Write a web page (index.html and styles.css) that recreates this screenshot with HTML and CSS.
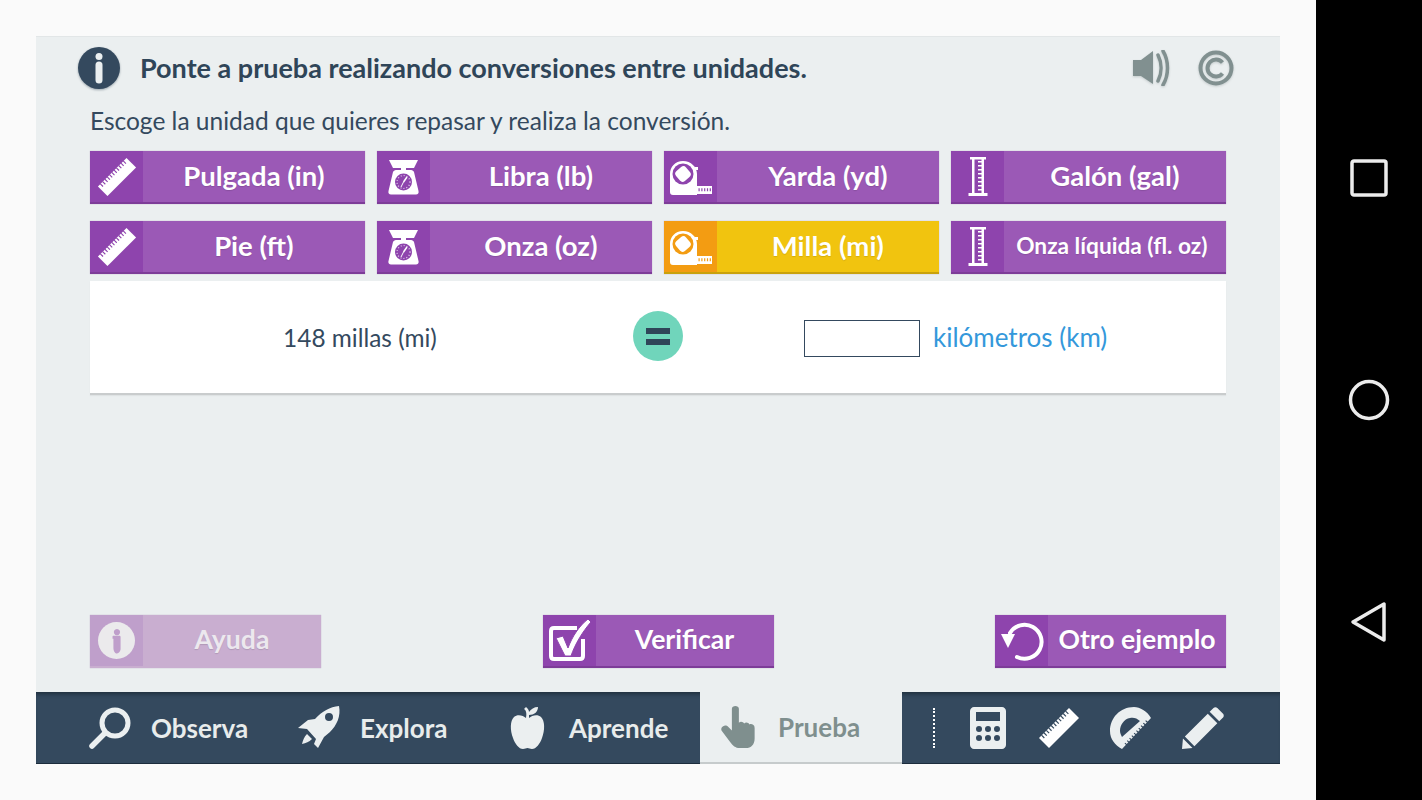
FILE: index.html
```html
<!DOCTYPE html>
<html lang="es">
<head>
<meta charset="utf-8">
<title>Conversiones entre unidades</title>
<link rel="stylesheet" href="styles.css">
</head>
<body>
<svg class="defs" width="0" height="0" aria-hidden="true">
  <symbol id="i-ruler" viewBox="0 0 42 42">
    <path class="paint" d="M31 1 41 11 11 41 1 31Z"/>
    <path class="ticks" d="M4.500 30 30 4.500"/>
  </symbol>
  <symbol id="i-scale" viewBox="0 0 31 36">
    <path class="paint" d="M1 1H30L26 9H18V11H23C24.500 11 25.500 12 26 13L30.500 32C31 34 30 35.500 28 35.500H3C1 35.500 0 34 .5 32L5 13C5.500 12 6.500 11 8 11H13V9H5Z"/>
    <circle class="hole" cx="15.500" cy="23" r="8.500"/>
    <circle cx="15.500" cy="23" r="6.500" fill="none" stroke="#fff" stroke-width="1.200" stroke-dasharray="1 2" opacity=".75"/>
    <path d="M15.500 23 19 18" stroke="#fff" stroke-width="1.500"/>
    <path d="M15.500 23 13 28" stroke="#fff" stroke-width="1"/>
  </symbol>
  <symbol id="i-tape" viewBox="0 0 42 34">
    <path class="paint" d="M13 0C21 0 27 6 27 13V25H42V33H27V34H3C1 34 0 33 0 31V13C0 6 5 0 13 0Z"/>
    <circle class="hole" cx="13" cy="13" r="10.500"/>
    <rect class="paint" x="6.500" y="6.500" width="13" height="13" rx="3.500" transform="rotate(-40 13 13)"/>
    <path class="ticks-flat" d="M28.500 28.800H41"/>
    <rect class="paint" x="25" y="6" width="3" height="3"/>
  </symbol>
  <symbol id="i-cyl" viewBox="0 0 20 39">
    <path class="paint" fill-rule="evenodd" d="M2 0H18V2.500H16V36H19.500V39H.5V36H4V2.500H2ZM6.500 2.500V36H13.500V33.500H10V32H13.500V29.500H10V28H13.500V25.500H10V24H13.500V21.500H10V20H13.500V17.500H10V16H13.500V13.500H10V12H13.500V9.500H10V8H13.500V5.500H10V4H13.500V2.500Z"/>
  </symbol>
  <symbol id="i-info" viewBox="0 0 38 38">
    <path fill="currentColor" d="M19 5.500A3.500 3.500 0 1 1 18.900 5.500ZM15 13H21.500C22.500 13 23 13.500 23 14.500V28C23 30 21 33 19 33S15 30 15 27V16.500H14V14C14 13.500 14.500 13 15 13Z"/>
  </symbol>
</svg>

<div class="app">
  <div class="screen">
    <main class="panel">
      <div class="content">
        <header class="head">
          <svg class="info-badge" viewBox="0 0 42 42">
            <circle cx="21" cy="21" r="21" fill="#34495e"/>
            <circle cx="21" cy="9.500" r="3.500" fill="#ebeff0"/>
            <rect x="17.500" y="14.500" width="7" height="22" rx="3.500" fill="#ebeff0"/>
          </svg>
          <h1 class="title">Ponte a prueba realizando conversiones entre unidades.</h1>
          <svg class="sound" viewBox="0 0 38 36">
            <path d="M1 10H9L21 1V34L9 26H1Z" fill="#819090"/>
            <path d="M26 5C30 13 30 23 26 31M31 1C37 11 37 25 31 35" fill="none" stroke="#819090" stroke-width="3.500" stroke-linecap="round"/>
          </svg>
          <svg class="copy" viewBox="0 0 36 36">
            <circle cx="18" cy="18" r="15.500" fill="none" stroke="#819090" stroke-width="4"/>
            <path d="M24.500 12.500A8.500 8.500 0 1 0 24.500 23.500" fill="none" stroke="#819090" stroke-width="4"/>
          </svg>
        </header>
        <p class="lead">Escoge la unidad que quieres repasar y realiza la conversión.</p>

        <div class="units">
          <button class="btn"><span class="btn-ic"><svg class="ic-ruler"><use href="#i-ruler"/></svg></span><span class="btn-tx">Pulgada (in)</span></button>
          <button class="btn"><span class="btn-ic"><svg class="ic-scale"><use href="#i-scale"/></svg></span><span class="btn-tx">Libra (lb)</span></button>
          <button class="btn"><span class="btn-ic"><svg class="ic-tape"><use href="#i-tape"/></svg></span><span class="btn-tx">Yarda (yd)</span></button>
          <button class="btn"><span class="btn-ic"><svg class="ic-cyl"><use href="#i-cyl"/></svg></span><span class="btn-tx">Galón (gal)</span></button>
          <button class="btn"><span class="btn-ic"><svg class="ic-ruler"><use href="#i-ruler"/></svg></span><span class="btn-tx">Pie (ft)</span></button>
          <button class="btn"><span class="btn-ic"><svg class="ic-scale"><use href="#i-scale"/></svg></span><span class="btn-tx">Onza (oz)</span></button>
          <button class="btn btn-active"><span class="btn-ic"><svg class="ic-tape"><use href="#i-tape"/></svg></span><span class="btn-tx">Milla (mi)</span></button>
          <button class="btn"><span class="btn-ic"><svg class="ic-cyl"><use href="#i-cyl"/></svg></span><span class="btn-tx btn-tx-small">Onza líquida (fl. oz)</span></button>
        </div>

        <section class="card">
          <div class="card-from">148 millas (mi)</div>
          <div class="equals"><span class="eq-bar"></span><span class="eq-bar"></span></div>
          <div class="card-to">
            <input class="answer" type="text" aria-label="kilómetros">
            <span class="unit-to">kilómetros (km)</span>
          </div>
        </section>

        <div class="actions">
          <button class="btn btn-action btn-disabled"><span class="btn-ic"><span class="help-disc"><svg class="help-glyph"><use href="#i-info"/></svg></span></span><span class="btn-tx">Ayuda</span></button>
          <button class="btn btn-action"><span class="btn-ic"><svg class="ic-check" viewBox="0 0 44 44">
            <path d="M30 9H7C5 9 4 10 4 12V37C4 39 5 40 7 40H33C35 40 36 39 36 37V20" fill="none" stroke="#fff" stroke-width="4"/>
            <path d="M9 19 16 17 21 29C25 18 32 7 41 0L44 3C36 12 28 25 24 37H18Z" fill="#fff" stroke="#8e44ad" stroke-width="1"/>
          </svg></span><span class="btn-tx">Verificar</span></button>
          <button class="btn btn-action"><span class="btn-ic"><svg class="ic-redo" viewBox="0 0 44 44">
            <path d="M10 13A17 17 0 1 1 17 37" transform="translate(0 1)" fill="none" stroke="#fff" stroke-width="4" stroke-linecap="round"/>
            <path d="M1 15H15L8 29Z" fill="#fff"/>
          </svg></span><span class="btn-tx">Otro ejemplo</span></button>
        </div>
      </div>

      <nav class="tabbar">
        <a class="tab tab-observa"><svg class="tab-ic" viewBox="0 0 44 44"><circle cx="27" cy="17" r="13" fill="none" stroke="#ebeff0" stroke-width="5"/><path d="M17 27 4 40" stroke="#ebeff0" stroke-width="5.500" stroke-linecap="round"/></svg><span>Observa</span></a>
        <a class="tab tab-explora"><svg class="tab-ic" viewBox="0 0 44 44"><path fill="#ebeff0" fill-rule="evenodd" d="M42 0C44 10 40 19 33 26L27 31 21 42 17 38 19 33 10 23 1 22 11 14 18 13C25 5 33 1 42 0ZM32 7A4 4 0 1 0 32 15 4 4 0 1 0 32 7ZM10 28 15 33C12 36 9 37 5 38 6 34 7 31 10 28Z"/></svg><span>Explora</span></a>
        <a class="tab tab-aprende"><svg class="tab-ic" viewBox="0 0 44 44"><path fill="#ebeff0" d="M23 12C26 9 32 8 35 11 39 15 39 24 36 32 34 38 30 43 26 43 24 43 23 42 21.500 42S19 43 17 43C13 43 9 38 7 32 4 24 4 15 8 11 11 8 17 9 20 12 20.500 9 21 5 18 3L20 1C22 3 23 4 23 6 25 3 28 1 32 1 32 6 28 9 23 9Z"/></svg><span>Aprende</span></a>
        <a class="tab tab-prueba"><svg class="tab-hand" viewBox="0 0 40 48"><path fill="#7f8f8e" d="M13 3C13 1 15 0 17 0S21 1 21 3V19C23 17 26 18 27 20 29 18 32 19 33 21 35 20 39 21 39 25V37C39 44 35 48 29 48H22C17 48 14 45 11 41L2 29C0 27 1 24 3 23S7 22 9 24L13 28Z"/></svg><span>Prueba</span></a>
        <div class="tools">
          <span class="dots"></span>
          <svg class="tool tool-calc" viewBox="0 0 36 42"><path fill="#ebeff0" fill-rule="evenodd" d="M4 0H32C34 0 36 2 36 4V38C36 40 34 42 32 42H4C2 42 0 40 0 38V4C0 2 2 0 4 0ZM6 5V14H30V5ZM9 19A3 3 0 1 0 9 25 3 3 0 1 0 9 19ZM18 19A3 3 0 1 0 18 25 3 3 0 1 0 18 19ZM27 19A3 3 0 1 0 27 25 3 3 0 1 0 27 19ZM9 28A3 3 0 1 0 9 34 3 3 0 1 0 9 28ZM18 28A3 3 0 1 0 18 34 3 3 0 1 0 18 28ZM27 28A3 3 0 1 0 27 34 3 3 0 1 0 27 28Z"/></svg>
          <svg class="tool tool-ruler"><use href="#i-ruler"/></svg>
          <svg class="tool tool-prot" viewBox="0 0 42 42">
            <path fill="#ebeff0" fill-rule="evenodd" d="M41 11C37 4 30 0 24 0 10 0 0 11 0 24 0 32 5 38 12 42ZM30 14C27 11 23 10 20 11 14 12 10 18 10 24 10 26 11 28 12 30Z"/>
            <path class="ticks" d="M37.500 14.500 15.500 38.500"/>
          </svg>
          <svg class="tool tool-pencil" viewBox="0 0 44 44"><path fill="#ebeff0" d="M33 1C34 0 36 0 37 1L43 7C44 8 44 10 43 11L39 15 29 5ZM27 7 37 17 13 41 3 31ZM1 33 11 43 0 44Z"/></svg>
        </div>
      </nav>
    </main>
  </div>

  <aside class="sysnav">
    <svg class="sys sys-square" viewBox="0 0 38 38"><rect x="2" y="2" width="34" height="34" rx="2" fill="none" stroke="#ececec" stroke-width="3.500"/></svg>
    <svg class="sys sys-circle" viewBox="0 0 42 42"><circle cx="21" cy="21" r="18.500" fill="none" stroke="#ececec" stroke-width="3.500"/></svg>
    <svg class="sys sys-back" viewBox="0 0 38 42"><path d="M34 3V39L3 21Z" fill="none" stroke="#ececec" stroke-width="3.500" stroke-linejoin="round"/></svg>
  </aside>
</div>
</body>
</html>
```

FILE: styles.css
```css
* { box-sizing: border-box; }
html, body { margin: 0; padding: 0; height: 800px; overflow: hidden; }
body { font-family: "Lato", "Open Sans", sans-serif; color: #2f4558; background: #fafafa; }
.defs { position: absolute; }

.paint { fill: #fff; }
.hole { fill: var(--ink); }
.ticks { fill: none; stroke: var(--ink); stroke-width: 4; stroke-dasharray: 1.2 2.2; }
.ticks-flat { fill: none; stroke: var(--ink); stroke-width: 3; stroke-dasharray: 1.2 1.6; }

.app { display: flex; height: 800px; }
.screen { width: 1316px; padding: 36px; background: #fafafa; }
.sysnav { width: 106px; background: #000; display: flex; flex-direction: column; align-items: center; padding-top: 159px; }
.sys { display: block; flex: none; }
.sys-square { width: 38px; height: 38px; }
.sys-circle { width: 42px; height: 42px; margin-top: 181.5px; }
.sys-back { width: 38px; height: 42px; margin-top: 180px; }

.panel { height: 728px; background: #ebeff0; display: flex; flex-direction: column; border-top: 1px solid #e2e6e7; }
.content { flex: 1; display: flex; flex-direction: column; padding: 0 54px 24px; }

.head { display: flex; align-items: center; height: 61px; margin-left: -12px; margin-right: -8px; }
.info-badge { width: 42px; height: 42px; flex: none; filter: drop-shadow(0 1px 1px #9aa5ac); }
.title { flex: 1; margin: 0 0 0 20px; font-size: 27px; font-weight: 700; line-height: 30px; color: #2f4558; white-space: nowrap; }
.sound { width: 38px; height: 36px; margin-right: 28px; filter: drop-shadow(0 1px 1px #c3cacb); }
.copy { width: 36px; height: 36px; filter: drop-shadow(0 1px 1px #c3cacb); }
.lead { margin: 8px 0 0; font-size: 24.5px; line-height: 30px; color: #34495e; white-space: nowrap; }

.units { display: grid; grid-template-columns: repeat(4, 274.75px); gap: 17px 12.25px; margin-top: 15px; }
.btn { display: flex; height: 53px; padding: 0; border: 0; border-bottom: 2px solid #7d3c98; background: #9b59b6; color: #fff; font-family: inherit; box-shadow: 0 0 1px #b9a4c4; }
.btn-ic { --ink: #8e44ad; width: 53px; flex: none; background: #8e44ad; display: flex; align-items: center; justify-content: center; }
.btn-tx { flex: 1; font-size: 27.500px; font-weight: 700; line-height: 49px; text-align: center; white-space: nowrap; text-shadow: 0 1px 1px rgba(0,0,0,.12); }
.btn-tx-small { font-size: 22.700px; padding-right: 6px; }
.btn-active { background: #f1c40f; border-bottom-color: #c9a20c; }
.btn-active .btn-ic { --ink: #f39c12; background: #f39c12; }
.ic-ruler { width: 40px; height: 40px; }
.ic-scale { width: 31px; height: 36px; }
.ic-tape { width: 42px; height: 34px; margin-top: 3px; }
.ic-cyl { width: 20px; height: 39px; }

.card { margin-top: 7px; height: 114px; background: #fff; border-bottom: 2px solid #c9cccd; box-shadow: 0 1px 1px #dfe3e4; display: flex; align-items: center; }
.card-from { width: 540px; text-align: center; font-size: 24.400px; color: #34495e; margin-top: 1px; }
.equals { width: 50px; height: 50px; border-radius: 50%; background: #70d5bb; display: flex; flex-direction: column; align-items: center; justify-content: center; gap: 5px; margin-left: 3px; margin-top: -2px; }
.eq-bar { width: 24px; height: 6px; background: #2f4558; }
.card-to { display: flex; align-items: center; margin-left: 121px; margin-top: 2px; }
.answer { width: 116px; height: 37px; border: 1px solid #34495e; background: #fff; padding: 0; }
.unit-to { margin-left: 13px; margin-top: -3px; font-size: 26px; color: #3498db; white-space: nowrap; }

.actions { margin-top: auto; display: flex; justify-content: space-between; }
.btn-action { width: 231px; }
.btn-action .btn-tx { font-size: 26.600px; }
.btn-disabled { background: #c9aed0; border-bottom-color: #c9aed0; color: #ece8ee; }
.btn-disabled .btn-ic { background: #bf9fcb; }
.help-disc { width: 37px; height: 37px; border-radius: 50%; background: #ebeaec; color: #bf9fcb; display: flex; align-items: center; justify-content: center; }
.help-glyph { width: 34px; height: 34px; }
.ic-check { width: 44px; height: 44px; }
.ic-redo { width: 44px; height: 44px; }

.tabbar { --ink: #34495e; height: 72px; background: #34495e; border-bottom: 1px solid #1c2c3c; box-shadow: inset 0 5px 4px -3px #1f2f3d; display: flex; align-items: stretch; padding-left: 52px; }
.tab { display: flex; align-items: center; font-size: 26px; font-weight: 700; color: #e8ecec; }
.tab-observa { width: 209px; }
.tab-explora { width: 209px; }
.tab-aprende { width: 194px; }
.tab-prueba { width: 202px; padding-left: 20px; background: #ebeff0; color: #7f8f8e; border-bottom: 2px solid #c6cbcc; margin-bottom: -1px; }
.tab-ic { width: 44px; height: 44px; margin-right: 19px; flex: none; }
.tab-hand { width: 36px; height: 42px; margin-right: 22px; flex: none; }
.tools { display: flex; align-items: center; padding-left: 31px; }
.dots { width: 0; height: 40px; border-left: 2px dotted #fff; margin-right: 35px; }
.tool { display: block; flex: none; }
.tool-calc { width: 36px; height: 42px; margin-right: 32px; }
.tool-ruler { width: 42px; height: 42px; margin-right: 30px; }
.tool-prot { width: 42px; height: 42px; margin-right: 30px; }
.tool-pencil { width: 42px; height: 42px; }
.tool-ruler .paint, .tool-prot .paint { fill: #ebeff0; }
```
